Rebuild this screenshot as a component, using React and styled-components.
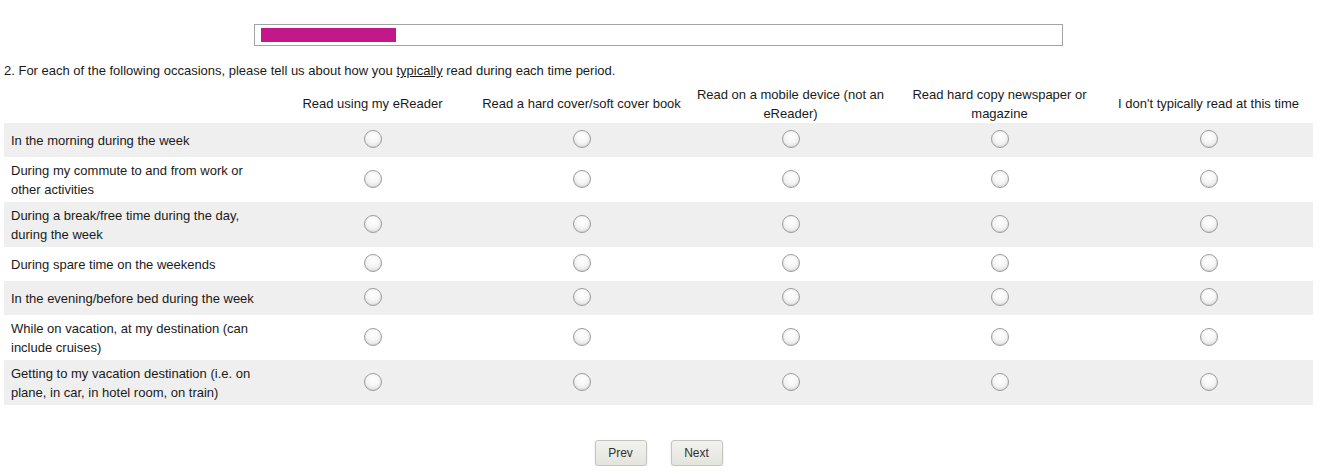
import React from 'react';
import styled, { createGlobalStyle } from 'styled-components';

const GlobalStyle = createGlobalStyle`
  html, body {
    margin: 0;
    padding: 0;
    background: #fff;
  }
  body {
    font-family: "Liberation Sans", Arial, sans-serif;
    font-size: 13px;
    color: #1a1a1a;
  }
`;

const StyledPage = styled.div`
  width: 1309px;
  padding: 24px 0 0 4px;
`;

const StyledProgress = styled.div`
  box-sizing: border-box;
  width: 809px;
  height: 22px;
  margin: 0 auto;
  padding: 3px 6px;
  border: 1px solid #a3a3a3;
`;

const StyledProgressFill = styled.div`
  height: 14px;
  background: #c2188a;
`;

const StyledQuestion = styled.p`
  margin: 16px 0 0;
  line-height: 18px;
`;

const StyledUnderline = styled.span`
  text-decoration: underline;
`;

const StyledGrid = styled.div`
  display: grid;
  grid-template-columns: 264px repeat(5, 209px);
  margin-top: 4px;
`;

const StyledHeadCell = styled.div`
  display: flex;
  align-items: center;
  justify-content: center;
  box-sizing: border-box;
  text-align: center;
  min-height: 39px;
  padding: 2px 2px 0;
  line-height: 18.5px;
`;

const StyledLabel = styled.div`
  display: flex;
  align-items: center;
  min-height: 34px;
  padding: 5px 7px 3px;
  box-sizing: border-box;
  line-height: 18.5px;
  background: ${({ $shaded }) => ($shaded ? '#efefef' : '#fff')};
`;

const StyledRadioCell = styled.div`
  display: flex;
  align-items: center;
  justify-content: center;
  background: ${({ $shaded }) => ($shaded ? '#efefef' : '#fff')};
`;

const StyledRadio = styled.input`
  appearance: none;
  width: 18px;
  height: 18px;
  margin: -2px 0 0;
  border-radius: 50%;
  border: 1px solid #9c9c9c;
  background: radial-gradient(circle at 50% 35%, #ffffff 0%, #f6f6f6 45%, #dedede 90%);
  box-shadow: inset 0 -1px 1px rgba(0, 0, 0, 0.06);
`;

const StyledNav = styled.div`
  display: flex;
  justify-content: center;
  gap: 24px;
  margin-top: 35px;
`;

const StyledButton = styled.button`
  width: 52px;
  height: 26px;
  padding: 0;
  font-family: "Liberation Sans", Arial, sans-serif;
  font-size: 12px;
  color: #333;
  border: 1px solid #c4c4c0;
  border-radius: 3px;
  background: linear-gradient(#f2f2ee, #e4e4df);
  box-shadow: 0 1px 2px rgba(0, 0, 0, 0.15);
`;

const columns = [
  'Read using my eReader',
  'Read a hard cover/soft cover book',
  'Read on a mobile device (not an eReader)',
  'Read hard copy newspaper or magazine',
  "I don't typically read at this time"
];

const occasions = [
  'In the morning during the week',
  'During my commute to and from work or other activities',
  'During a break/free time during the day, during the week',
  'During spare time on the weekends',
  'In the evening/before bed during the week',
  'While on vacation, at my destination (can include cruises)',
  'Getting to my vacation destination (i.e. on plane, in car, in hotel room, on train)'
];

const App = () => {
  return (
    <StyledPage>
      <GlobalStyle />
      <StyledProgress>
        <StyledProgressFill style={{ width: '135px' }} />
      </StyledProgress>
      <StyledQuestion>
        2. For each of the following occasions, please tell us about how you{' '}
        <StyledUnderline>typically</StyledUnderline> read during each time period.
      </StyledQuestion>
      <StyledGrid>
        <StyledHeadCell />
        {columns.map((col) => (
          <StyledHeadCell key={col}>{col}</StyledHeadCell>
        ))}
        {occasions.map((occ, i) => (
          <React.Fragment key={occ}>
            <StyledLabel $shaded={i % 2 === 0}>{occ}</StyledLabel>
            {columns.map((col) => (
              <StyledRadioCell key={col} $shaded={i % 2 === 0}>
                <StyledRadio type="radio" name={`q-${i}`} aria-label={col} />
              </StyledRadioCell>
            ))}
          </React.Fragment>
        ))}
      </StyledGrid>
      <StyledNav>
        <StyledButton>Prev</StyledButton>
        <StyledButton>Next</StyledButton>
      </StyledNav>
    </StyledPage>
  );
};

export default App;
